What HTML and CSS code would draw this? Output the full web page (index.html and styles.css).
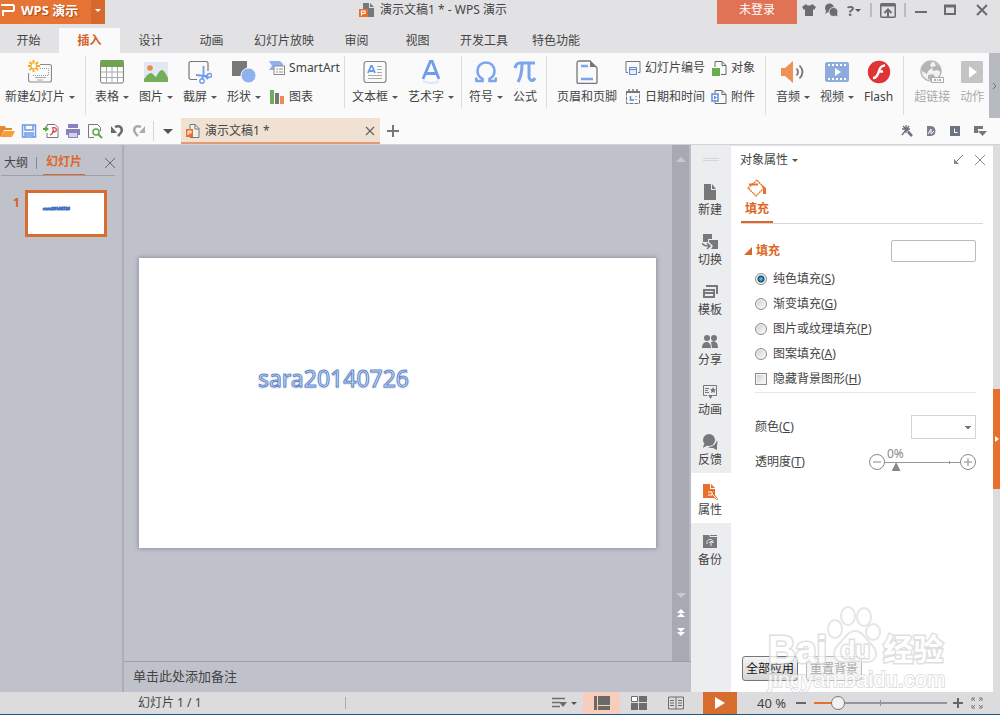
FILE: index.html
```html
<!DOCTYPE html>
<html lang="zh-CN">
<head>
<meta charset="utf-8">
<title>演示文稿1 * - WPS 演示</title>
<link rel="stylesheet" href="styles.css">
</head>
<body>
<header class="titlebar">
  <button class="brand">
    <svg width="18" height="18" viewBox="0 0 18 18" fill="none" stroke="#fff" stroke-width="2"><path d="M1 2h12l1 1v4l-1 1H3v5"/></svg>
    <span class="brand-name">WPS 演示</span>
    <span class="brand-arrow"><i class="caret"></i></span>
  </button>
  <h1 class="window-title">
    <svg width="16" height="16" viewBox="0 0 16 16"><path d="M4 1h6v5h5v9H4z" fill="#77787b"/><path d="M11 1l4 4h-4z" fill="#77787b"/><path d="M0 7h9v8H0z" fill="#e8702c"/><path d="M2.500 13.500V9H6v2.500H3" fill="none" stroke="#fff" stroke-width="1.200"/></svg>
    演示文稿1 * - WPS 演示
  </h1>
  <button class="login">未登录</button>
  <div class="window-tools">
    <button aria-label="皮肤"><svg width="14" height="14" viewBox="0 0 14 14" fill="#6b6c6f"><path d="M4 1c1 2 5 2 6 0l4 3-2 3-1-1v7H3V6L2 7 0 4z"/></svg></button>
    <button aria-label="反馈"><svg width="14" height="14" viewBox="0 0 14 14" fill="#6b6c6f"><circle cx="5.500" cy="5" r="4.500"/><path d="M2 8l-1 3 3-2z"/><circle cx="9.500" cy="9" r="4.500" stroke="#e2e2e4"/><path d="M11 12l2.500 1.500-.5-3z"/></svg></button>
    <button class="help" aria-label="帮助">?<i class="caret"></i></button>
    <span class="tool-sep"></span>
    <button aria-label="隐藏功能区"><svg width="16" height="15" viewBox="0 0 16 15" fill="none" stroke="#6b6c6f"><rect x=".75" y=".75" width="14.500" height="13.500" rx="1" stroke-width="1.500"/><path d="M1 2h14" stroke-width="3"/><path d="M8 14V7M4.500 10L8 6.500l3.500 3.500" stroke-width="2"/></svg></button>
    <span class="tool-sep"></span>
    <button aria-label="最小化"><svg width="14" height="14" viewBox="0 0 14 14"><path d="M1 9h12" stroke="#6b6c6f" stroke-width="2"/></svg></button>
    <button class="maximize" aria-label="最大化"><svg width="14" height="14" viewBox="0 0 14 14"><path d="M2 3h10v8H2z" stroke="#6b6c6f" stroke-width="2" fill="none"/><path d="M1 3h12" stroke="#6b6c6f" stroke-width="3"/></svg></button>
    <button class="close" aria-label="关闭"><svg width="14" height="14" viewBox="0 0 14 14"><path d="M2 2l10 10M12 2L2 12" stroke="#6b6c6f" stroke-width="2"/></svg></button>
  </div>
</header>

<nav class="tabs">
  <button>开始</button><button class="active">插入</button><button>设计</button><button>动画</button><button>幻灯片放映</button><button>审阅</button><button>视图</button><button>开发工具</button><button>特色功能</button>
</nav>

<section class="ribbon">
  <div class="group tall">
    <button class="tool">
      <svg width="24" height="24" viewBox="0 0 24 24" fill="none"><path d="M12 4.500h9.500a2 2 0 0 1 2 2V20a2 2 0 0 1-2 2h-19a2 2 0 0 1-2-2v-7" stroke="#8b8b8b" stroke-width="1.200"/><path d="M12 8.500h8.500v7H4" stroke="#9a9a9a" stroke-dasharray="1 1"/><path d="M7 17.500h11M9 20h6" stroke="#aaa"/><path d="M5.500 0v3.500M5.500 8v4M0 6h3.500M8 6h4M1.500 2l2.500 2.500M7.500 7.500L10 10M1.500 10L4 7.500M7.500 4.500L10 2" stroke="#f5ad20" stroke-width="2"/></svg>
      <span>新建幻灯片<i class="caret"></i></span>
    </button>
  </div>
  <div class="group first-set">
    <button class="tool">
      <svg width="24" height="24" viewBox="0 0 24 24"><rect x=".6" y="1" width="22.800" height="22" rx="1.500" fill="#fff" stroke="#777"/><path d="M.5 0h23v7H.5z" fill="#6fa552"/><path d="M1 12h22M1 17.500h22M6.500 7v16M12 7v16M17.500 7v16" stroke="#aaa"/></svg>
      <span>表格<i class="caret"></i></span>
    </button>
    <button class="tool">
      <svg width="24" height="24" viewBox="0 0 24 24"><path d="M0 2h24v20H0z" fill="#e0e9f3"/><circle cx="6" cy="8" r="2.800" fill="#f0884c"/><path d="M0 22v-3c3-4 5-6 7-6s3 3 5 4c2-4 4-7 6-7s4 4 6 8v4z" fill="#76ad57"/></svg>
      <span>图片<i class="caret"></i></span>
    </button>
    <button class="tool">
      <svg width="24" height="24" viewBox="0 0 24 24" fill="none"><path d="M9 19.500H3a2 2 0 0 1-2-2V3.500a2 2 0 0 1 2-2h15a2 2 0 0 1 2 2V11" stroke="#777" stroke-width="1.200"/><path d="M15.500 6v9l-1.500 4M8 15l9 1 3-1M17 16l3 3" stroke="#6f9bec" stroke-width="1.800"/><circle cx="14" cy="21" r="2.200" stroke="#6f9bec" stroke-width="1.400"/><circle cx="21.500" cy="15.500" r="2" stroke="#6f9bec" stroke-width="1.400"/></svg>
      <span>截屏<i class="caret"></i></span>
    </button>
    <button class="tool">
      <svg width="24" height="24" viewBox="0 0 24 24"><path d="M0 1h15v15H0z" fill="#77787a"/><circle cx="16.500" cy="15.500" r="7.500" fill="#8db2ee" stroke="#fafafa"/></svg>
      <span>形状<i class="caret"></i></span>
    </button>
    <div class="stack">
      <button class="mini"><svg width="16" height="16" viewBox="0 0 16 16"><path d="M0 1h11l3 3v2H6v4H0l3-4z" fill="#8db2ee"/><rect x="5" y="6" width="10.500" height="8.500" fill="#fff" stroke="#888"/><path d="M7 9h2M10 9h4M7 12h2M10 12h4" stroke="#888"/></svg>SmartArt</button>
      <button class="mini"><svg width="16" height="16" viewBox="0 0 16 16"><path d="M1 1h4v14H1z" fill="#72ad55"/><path d="M6 4h4v11H6z" fill="#777"/><path d="M11 7h4v8h-4z" fill="#ee8a55"/></svg>图表</button>
    </div>
  </div>
  <div class="group">
    <button class="tool">
      <svg width="24" height="24" viewBox="0 0 24 24" fill="none"><rect x="1" y="1.500" width="22" height="21" rx="2.500" stroke="#888" stroke-width="1.200"/><path d="M5 13l3-7h1l3 7M6 11h5" stroke="#6f9bec" stroke-width="1.800"/><path d="M14 6.500h5M14 9.500h5M14 12.500h5M5 15.500h14M5 18.500h14" stroke="#aaa"/></svg>
      <span>文本框<i class="caret"></i></span>
    </button>
    <button class="tool">
      <svg width="24" height="24" viewBox="0 0 24 24" fill="none"><path d="M4 19L11.500 1h1.500L20 19M7 13.500h10" stroke="#6f9bec" stroke-width="2.800"/><path d="M4 21q8 4 16 0" stroke="#dbe8fc" stroke-width="2"/></svg>
      <span>艺术字<i class="caret"></i></span>
    </button>
  </div>
  <div class="group symbols">
    <button class="tool">
      <svg width="24" height="24" viewBox="0 0 24 24" fill="none"><path d="M2 17.500l.5 3.500H8.500v-2C5 17 3.500 14 3.500 11 3.500 6 7 2.500 12 2.500S20.500 6 20.500 11c0 3-1.500 6-5 8v2h6l.5-3.500" stroke="#7da4ef" stroke-width="2.600"/></svg>
      <span>符号<i class="caret"></i></span>
    </button>
    <button class="tool">
      <svg width="24" height="24" viewBox="0 0 24 24" fill="none" stroke="#7da4ef"><path d="M2 8c1-4 2-5 5-5h15" stroke-width="3.200"/><path d="M9 4c0 8-1 13-4 18" stroke-width="3"/><path d="M16 4v12c0 5 4 6 6 2" stroke-width="3"/></svg>
      <span>公式</span>
    </button>
  </div>
  <div class="group tall">
    <button class="tool">
      <svg width="24" height="24" viewBox="0 0 24 24" fill="none"><path d="M15 1H4a2 2 0 0 0-2 2v19a1.500 1.500 0 0 0 1.500 1.500h17A1.500 1.500 0 0 0 22 22V8z" stroke="#777" stroke-width="1.300"/><path d="M15 1v6h7z" fill="#777"/><path d="M6 6h7M6 19h12" stroke="#7da4ef" stroke-width="2.500"/></svg>
      <span>页眉和页脚</span>
    </button>
    <div class="stack">
      <button class="mini"><svg width="16" height="16" viewBox="0 0 16 16" fill="none"><path d="M3 12.500H1V1.500h14v11h-2" stroke="#777"/><path d="M4.500 7.500h7v7h-7z" fill="#e7effd" stroke="#5e89dc"/><path d="M5 9.500h6" stroke="#5e89dc"/></svg>幻灯片编号</button>
      <button class="mini"><svg width="16" height="16" viewBox="0 0 16 16" fill="none"><path d="M1.500 3.500h13v11h-13z" stroke="#777" stroke-dasharray="4 1"/><path d="M1 3h14" stroke="#777" stroke-width="2"/><path d="M4 0v4M8 0v4M12 0v4" stroke="#777" stroke-width="1.500"/><path d="M5.500 7v4H9" stroke="#5e89dc" stroke-width="1.500"/><path d="M10 7.500h2M10 10.500h2" stroke="#aaa"/></svg>日期和时间</button>
    </div>
    <div class="stack stack-near">
      <button class="mini"><svg width="16" height="16" viewBox="0 0 16 16" fill="none"><path d="M4 7V1.500h7l4 4v9h-5M11 1.500v4h4" stroke="#666"/><path d="M1 8h8v8H1z" fill="#6cab4e"/></svg>对象</button>
      <button class="mini"><svg width="16" height="16" viewBox="0 0 16 16" fill="none"><path d="M4 4V1.500h7l4 4v9H4V13M11 1.500v4h4" stroke="#666"/><path d="M1 5h6v7H1z" fill="#fff" stroke="#5e89dc" stroke-width="1.500"/><path d="M3 6.500v4L6 8.500z" fill="#5e89dc"/></svg>附件</button>
    </div>
  </div>
  <div class="group tall">
    <button class="tool">
      <svg width="24" height="24" viewBox="0 0 24 24" fill="none"><path d="M0 8h4l8-7v22l-8-7H0z" fill="#ee9157"/><path d="M15.500 8.500q3 3.500 0 7M18.500 5.500q6 6.500 0 13" stroke="#777" stroke-width="1.800"/></svg>
      <span>音频<i class="caret"></i></span>
    </button>
    <button class="tool">
      <svg width="24" height="24" viewBox="0 0 24 24"><rect y="2" width="24" height="20" rx="2" fill="#8eabdd"/><path d="M3 5h19M3 19h19" stroke="#fff" stroke-width="2" stroke-dasharray="2 2"/><path d="M10 8v8l6-4z" fill="#fff"/></svg>
      <span>视频<i class="caret"></i></span>
    </button>
    <button class="tool">
      <svg width="24" height="24" viewBox="0 0 24 24" fill="none"><circle cx="12" cy="12" r="11.200" fill="#df3434"/><path d="M18 5.500c-5 0-5.500 4-6.500 7s-2 5.500-5.500 5.500M11 11.500h5" stroke="#fff" stroke-width="2.400"/></svg>
      <span>Flash</span>
    </button>
  </div>
  <div class="group last">
    <button class="tool" disabled>
      <svg width="24" height="24" viewBox="0 0 24 24"><circle cx="11" cy="11" r="10" fill="#f2f2f2" stroke="#bababa" stroke-width="1.500"/><path d="M2 7l5-5 5 0-2 3 2 3-4 3-1 3-5-3zM14 2l6 5 1 5-4-2-4 1-1-4 4-1zM8 15l5-1 3 4-4 3-4-2z" fill="#b4b4b4"/><path d="M11.500 17.500h12v5h-12z" fill="#fafafa" stroke="#aaa"/><path d="M14 20h2M17 20h1M19 20h2" stroke="#aaa" stroke-width="2"/></svg>
      <span>超链接</span>
    </button>
    <button class="tool" disabled>
      <svg width="24" height="24" viewBox="0 0 24 24"><rect x="1" y="1" width="22" height="22" rx="1.500" fill="#c4c4c4"/><path d="M9 6v12l8-6z" fill="#fff"/></svg>
      <span>动作</span>
    </button>
  </div>
  <button class="ribbon-more" aria-label="更多"><svg width="5" height="8" viewBox="0 0 5 8"><path d="M1 1l3 3-3 3" fill="none" stroke="#6d7078"/></svg></button>
</section>

<section class="quickbar">
  <div class="quick-tools">
    <button aria-label="打开"><svg width="16" height="16" viewBox="0 0 16 16"><path d="M1 3h5l1 2h6v2H5l-3 6H1z" fill="#e58930"/><path d="M5 8h11l-3 6H1z" fill="#fa9d38"/></svg></button>
    <button aria-label="保存"><svg width="16" height="16" viewBox="0 0 16 16" fill="none" stroke="#6f98e6" stroke-width="1.500"><path d="M1.500 2h13v12h-13z"/><path d="M4 2v5h8V2M4 14V10h8v4M5 12h6"/></svg></button>
    <button aria-label="输出为PDF"><svg width="16" height="16" viewBox="0 0 16 16" fill="none"><path d="M4 4V1.500h8l3 3v10H4V10" stroke="#777"/><path d="M0 5h3v2H0z" fill="#58a83e"/><path d="M2 3l4 3-4 3z" fill="#58a83e"/><path d="M9 5c4-1 5 1 4 3-1 1-3 1-4 1M10 6c1 3-1 5-3 6" stroke="#d6474b" stroke-width="1.300"/></svg></button>
    <button aria-label="打印"><svg width="16" height="16" viewBox="0 0 16 16"><path d="M3 1h10v4H3zM1 6h14v6H1z" fill="#8883bd"/><path d="M3.500 9.500h9v5h-9z" fill="#d5d2ef" stroke="#8883bd"/></svg></button>
    <button aria-label="打印预览"><svg width="16" height="16" viewBox="0 0 16 16" fill="none"><path d="M7 14.500H1.500v-13h9l3 3V8" stroke="#777"/><circle cx="9" cy="9" r="3" stroke="#63a34a" stroke-width="1.500"/><path d="M11 11l4 4" stroke="#63a34a" stroke-width="2"/></svg></button>
    <button aria-label="撤销"><svg width="16" height="16" viewBox="0 0 16 16" fill="none"><path d="M6 4c6-3 10 3 3 9" stroke="#696969" stroke-width="2.500"/><path d="M2 3v7h6z" fill="#696969"/></svg></button>
    <button aria-label="恢复"><svg width="16" height="16" viewBox="0 0 16 16" fill="none"><path d="M10 4C4 1 0 7 7 13" stroke="#aaa" stroke-width="2.500"/><path d="M14 3v7H8z" fill="#aaa"/></svg></button>
    <span class="quick-sep"></span>
    <button aria-label="自定义"><i class="caret big"></i></button>
  </div>
  <div class="doc-tab">
    <svg width="16" height="16" viewBox="0 0 16 16"><path d="M5 1.500h5l4 4v9H5z" fill="#eee" stroke="#777"/><path d="M10 1v5h4" fill="none" stroke="#777"/><path d="M1 6h7v8H1z" fill="#e8702c"/><path d="M3 12V8h3v2H3" fill="none" stroke="#fff"/></svg>
    <span>演示文稿1 *</span>
    <button aria-label="关闭文稿"><svg width="10" height="10" viewBox="0 0 10 10"><path d="M1 1l8 8M9 1L1 9" stroke="#666" stroke-width="1.300"/></svg></button>
  </div>
  <button class="new-doc" aria-label="新建文稿"><svg width="14" height="14" viewBox="0 0 14 14"><path d="M7 1v12M1 7h12" stroke="#777" stroke-width="2"/></svg></button>
  <div class="quick-right">
    <button aria-label="工具"><svg width="12" height="12" viewBox="0 0 12 12" fill="none" stroke="#6c6e7d"><path d="M5 0v8M1 4h8M2 1l7 7M8 1L1 10" stroke-width="1.300"/><path d="M7 7l4 4" stroke-width="2.500"/></svg></button>
    <button aria-label="文档"><svg width="12" height="12" viewBox="0 0 12 12"><path d="M2 1h4c6 0 6 10 0 10H2z" fill="#7b7e8d"/><path d="M3 9l3-5v5l3-3" stroke="#fff" fill="none"/></svg></button>
    <button aria-label="历史"><svg width="12" height="12" viewBox="0 0 12 12"><path d="M1 1h10v10H1z" fill="#6e7281"/><path d="M5.500 3.500v4h3" stroke="#fff" fill="none"/></svg></button>
    <button aria-label="窗口"><svg width="14" height="12" viewBox="0 0 14 12" fill="#75767c"><path d="M1 1h9v3H5v4H1z"/><path d="M5 6h9l-4.500 5z"/></svg></button>
  </div>
</section>

<main class="workspace">
  <aside class="outline">
    <div class="outline-tabs">
      <button>大纲</button><span class="bar"></span><button class="active">幻灯片</button>
      <button class="outline-close" aria-label="关闭"><svg width="10" height="10" viewBox="0 0 10 10"><path d="M0 0l10 10M10 0L0 10" stroke="#66676e"/></svg></button>
    </div>
    <div class="thumb-row">
      <span class="thumb-no">1</span>
      <div class="thumb"><div class="thumb-text">sara20140726</div></div>
    </div>
  </aside>

  <section class="editor">
    <div class="canvas">
      <div class="stage"><div class="slide"><div class="wordart">sara20140726</div></div></div>
      <div class="scrollbar">
        <button aria-label="向上"><svg width="10" height="6" viewBox="0 0 10 6"><path d="M0 6l5-5 5 5z" fill="#c9c9cc"/></svg></button>
        <span class="scroll-space"></span>
        <button aria-label="向下"><svg width="10" height="6" viewBox="0 0 10 6"><path d="M0 0l5 5 5-5z" fill="#c9c9cc"/></svg></button>
        <button aria-label="上一张"><svg width="10" height="10" viewBox="0 0 10 10" fill="#fff"><path d="M1 5l4-4 4 4zM1 9l4-4 4 4z"/></svg></button>
        <button aria-label="下一张"><svg width="10" height="10" viewBox="0 0 10 10" fill="#fff"><path d="M1 1l4 4 4-4zM1 5l4 4 4-4z"/></svg></button>
      </div>
    </div>
    <div class="notes">单击此处添加备注</div>
  </section>

  <nav class="rail">
    <span class="grip"></span>
    <button><svg width="16" height="16" viewBox="0 0 16 16" fill="#77787a"><path d="M2 0h7v6h5v10H2z"/><path d="M10 0l4 5h-4z"/></svg>新建</button>
    <button><svg width="16" height="16" viewBox="0 0 16 16" fill="#77787a"><path d="M1 0h9v5H6v3H1zM7 6h9v9H9l2-3-4-4z"/><path d="M0 9c1 3 4 3 7 3M5 9l3 3-3 3" fill="none" stroke="#77787a" stroke-width="1.500"/></svg>切换</button>
    <button><svg width="16" height="16" viewBox="0 0 16 16" fill="none" stroke="#77787a" stroke-width="2"><path d="M4 2h11v8"/><path d="M2 6h10v7H2z"/><path d="M3 9h8"/></svg>模板</button>
    <button><svg width="16" height="16" viewBox="0 0 16 16" fill="#77787a"><circle cx="5" cy="4" r="3"/><circle cx="12" cy="4" r="3"/><path d="M0 14c0-8 9-8 9 0zM9 8c4-2 7 1 7 6h-6z"/></svg>分享</button>
    <button><svg width="16" height="16" viewBox="0 0 16 16" fill="none" stroke="#77787a"><path d="M5 11.500H1.500v-10h13v10H11M3 4.500h4M3 6.500h3M3 8.500h4"/><path d="M11 3l1 2h2l-1.500 1.500.5 2.500-2-1-2 1 .5-2.500L8 5h2zM6 11h5l-2.500 4z" fill="#77787a" stroke="none"/></svg>动画</button>
    <button><svg width="16" height="16" viewBox="0 0 16 16" fill="#77787a"><circle cx="7" cy="6" r="6"/><path d="M2 10l-1 4 5-3zM15 6c1 3 0 4 0 6v4l-4-2c-2 0-4 0-5-1 5 0 8-3 9-7z"/></svg>反馈</button>
    <button class="active"><svg width="16" height="16" viewBox="0 0 16 16"><path d="M1 0h7v5h5v6l3 4-1 1-3-2H1z" fill="#e8702c"/><path d="M9 0l4 4H9z" fill="#e8702c"/><path d="M6 8h4v3H6M10 10l5 5" stroke="#fff" fill="none"/></svg>属性</button>
    <button><svg width="16" height="16" viewBox="0 0 16 16"><path d="M1 1h6l1 2h7v11H1z" fill="#77787a"/><path d="M8 1.500h7" stroke="#77787a"/><path d="M5 10c-1-6 7-6 6-1M9 7v5M7 9l2-2 2 2" fill="none" stroke="#ecedef"/></svg>备份</button>
  </nav>

  <aside class="panel">
    <header class="panel-head">
      <button>对象属性<i class="caret"></i></button>
      <span class="grow"></span>
      <button aria-label="停靠"><svg width="10" height="10" viewBox="0 0 10 10"><path d="M10 0L3 7" stroke="#777"/><path d="M1 4v5h5z" fill="#888"/></svg></button>
      <button aria-label="关闭"><svg width="10" height="10" viewBox="0 0 10 10"><path d="M0 0l10 10M10 0L0 10" stroke="#888"/></svg></button>
    </header>
    <div class="panel-tabs">
      <button class="panel-tab"><svg width="20" height="18" viewBox="0 0 20 18" fill="none"><path d="M1 9l9-8 7 8-8 8z" stroke="#e8702c" stroke-width="1.300" stroke-dasharray="2 .5"/><path d="M2 5.500h9" stroke="#e8702c" stroke-width="2"/><path d="M14 5l5 4v6h-3V9z" fill="#e8702c"/></svg>填充</button>
    </div>
    <form class="props">
      <div class="prop-row section-row">
        <span class="section-title"><svg width="8" height="8" viewBox="0 0 8 8"><path d="M8 0v8H0z" fill="#dd6826"/></svg>填充</span>
        <input class="preview" type="text" aria-label="填充预览">
      </div>
      <fieldset class="choices">
        <label><input type="radio" name="fill" checked><span>纯色填充(<u>S</u>)</span></label>
        <label><input type="radio" name="fill"><span>渐变填充(<u>G</u>)</span></label>
        <label><input type="radio" name="fill"><span>图片或纹理填充(<u>P</u>)</span></label>
        <label><input type="radio" name="fill"><span>图案填充(<u>A</u>)</span></label>
        <label><input type="checkbox"><span>隐藏背景图形(<u>H</u>)</span></label>
      </fieldset>
      <div class="prop-row color-row">
        <label for="color">颜色(<u>C</u>)</label>
        <select id="color"><option></option></select>
      </div>
      <div class="prop-row alpha-row">
        <label for="alpha">透明度(<u>T</u>)</label>
        <div class="alpha">
          <button type="button" aria-label="减少"><svg width="16" height="16" viewBox="0 0 16 16" fill="none" stroke="#888"><circle cx="8" cy="8" r="7.500"/><path d="M4 8h8"/></svg></button>
          <div class="alpha-track"><output for="alpha">0%</output><input id="alpha" type="range" min="0" max="100" value="10"></div>
          <button type="button" aria-label="增加"><svg width="16" height="16" viewBox="0 0 16 16" fill="none" stroke="#888"><circle cx="8" cy="8" r="7.500"/><path d="M4 8h8M8 4v8"/></svg></button>
        </div>
      </div>
    </form>
    <footer class="panel-foot">
      <button>全部应用</button><button disabled>重置背景</button>
    </footer>
    <div class="watermark">
      <svg class="paw" width="56" height="60" viewBox="0 0 56 60" fill="#fff" stroke="#dedede" stroke-width="2"><ellipse cx="8" cy="23" rx="7" ry="9"/><ellipse cx="21" cy="10" rx="7" ry="9"/><ellipse cx="37" cy="11" rx="7" ry="9"/><ellipse cx="46" cy="26" rx="7" ry="8"/><path d="M28 25c8 0 10 8 17 14 9 10 2 18-7 17-7-1-13-1-20 0-10 1-15-8-7-17 7-6 9-14 17-14z"/></svg>
      <div class="mark-line"><span>Bai</span><span class="du">du</span><span class="cn">经验</span></div>
      <div class="mark-url">jingyan.baidu.com</div>
    </div>
  </aside>
  <div class="edge"><button aria-label="收起"><svg width="4" height="6" viewBox="0 0 4 6"><path d="M0 0v6l4-3z" fill="#fff"/></svg></button></div>
</main>

<footer class="status">
  <span class="page-no">幻灯片 1 / 1</span>
  <span class="status-sep"></span>
  <span class="grow"></span>
  <button class="note-btn" aria-label="备注"><svg width="16" height="12" viewBox="0 0 16 12" fill="none" stroke="#6d6d6f"><path d="M1 1.500h13M1 5.500h8M1 9.500h8" stroke-width="1.300"/><path d="M8 5h8l-4 5z" fill="#6d6d6f" stroke="none"/></svg><i class="caret"></i></button>
  <button class="view active" aria-label="普通视图"><svg width="16" height="14" viewBox="0 0 16 14" fill="#6d6868"><path d="M0 0h3v14H0zM4 0h12v9H4zM4 10h12v4H4z"/></svg></button>
  <button class="view" aria-label="浏览视图"><svg width="16" height="14" viewBox="0 0 16 14" fill="#6d6d6f"><path d="M.5.500h6v5h-6z" fill="#fff" stroke="#6d6d6f"/><path d="M8 0h8v6H8zM0 7h7v7H0zM8 7h8v7H8z"/></svg></button>
  <button class="view" aria-label="阅读视图"><svg width="16" height="14" viewBox="0 0 16 14" fill="none" stroke="#6d6d6f"><path d="M.5 1h15v12H.5zM8 1v12M2 4.500h4M2 7h4M2 9.500h4M10 4.500h4M10 7h4M10 9.500h4"/></svg></button>
  <button class="play" aria-label="放映"><svg width="12" height="14" viewBox="0 0 12 14"><path d="M1 1v12l10-6z" fill="#fff"/></svg></button>
  <span class="percent">40 %</span>
  <button class="zoom-btn" aria-label="缩小"><svg width="12" height="12" viewBox="0 0 12 12"><path d="M1 6h10" stroke="#666" stroke-width="2"/></svg></button>
  <input class="zoom" type="range" min="0" max="100" value="14" aria-label="显示比例">
  <button class="zoom-btn" aria-label="放大"><svg width="12" height="12" viewBox="0 0 12 12"><path d="M1 6h10M6 1v10" stroke="#666" stroke-width="2"/></svg></button>
  <button class="fit" aria-label="适应窗口"><svg width="12" height="12" viewBox="0 0 12 12" fill="none" stroke="#777"><path d="M1 4V1h3M8 1h3v3M11 8v3H8M4 11H1V8M2 2l2 2M10 2L8 4M10 10L8 8M2 10l2-2"/></svg></button>
</footer>
</body>
</html>
```

FILE: styles.css
```css
* { box-sizing: border-box; }

body {
  margin: 0;
  height: 100vh;
  display: flex;
  flex-direction: column;
  overflow: hidden;
  background: #e2e2e4;
  color: #444;
  font: 12px/16px "Noto Sans", "Noto Sans CJK SC", sans-serif;
}

button {
  display: flex;
  align-items: center;
  justify-content: center;
  margin: 0;
  padding: 0;
  border: 0;
  background: none;
  color: inherit;
  font: inherit;
  white-space: nowrap;
}

svg { flex: none; display: block; }
.grow { flex: 1; }

.caret {
  display: inline-block;
  margin-left: 4px;
  border: 3px solid transparent;
  border-top-color: #555;
  border-bottom: 0;
  vertical-align: middle;
}
.caret.big { margin: 0; border-width: 5px 5px 0; }

/* Title bar */
.titlebar { display: flex; height: 28px; align-items: flex-start; }
.brand { width: 105px; height: 24px; background: #e57435; color: #fff; justify-content: flex-start; }
.brand-name { flex: 1; padding-bottom: 4px; font-size: 13px; font-weight: bold; text-align: left; text-shadow: 1px 1px 1px #a84b18; }
.brand svg { margin-right: 3px; }
.brand-arrow { display: flex; align-items: center; justify-content: center; width: 14px; height: 24px; padding-bottom: 4px; background: #d8692e; }
.brand-arrow .caret { margin: 0; border-top-color: #fff; }
.window-title {
  flex: 1;
  display: flex;
  align-items: center;
  justify-content: center;
  gap: 5px;
  margin: 0;
  padding-left: 44px;
  height: 20px;
  font-size: 12px;
  font-weight: normal;
}
.login { width: 80px; height: 24px; padding-bottom: 4px; background: #e07356; color: #fff; }
.window-tools { display: flex; align-items: center; gap: 8px; width: 203px; height: 20px; padding-left: 5px; }
.window-tools .help { width: 16px; font-size: 15px; font-weight: bold; color: #6b6c6f; }
.window-tools .help .caret { margin-left: 1px; }
.window-tools .maximize { margin-left: 7px; }
.window-tools .close { margin-left: 10px; }
.tool-sep { width: 2px; height: 14px; background: #bbbbbe; }

/* Tabs */
.tabs { display: flex; height: 25px; margin-left: -2px; }
.tabs button { min-width: 61px; padding: 0 12px; }
.tabs .active { background: #fafafa; color: #d7601e; font-weight: bold; }

/* Ribbon */
.ribbon { display: flex; height: 65px; background: #fafafa; }
.group { display: flex; align-items: flex-start; gap: 10px; height: 52px; margin-top: 3px; padding: 4px 7px 0; border-right: 1px solid #dcdcdc; }
.group.tall { height: 59px; padding: 4px 10px 0; }
.group.tall:first-child { padding-left: 5px; }
.group.last { border: 0; padding: 4px 5px 0 10px; }
.group.first-set { padding: 4px 4px 0 9px; }
.group.symbols { padding-right: 9px; }
.tool { flex-direction: column; gap: 5px; }
.tool:disabled { color: #aaa; }
.stack { display: flex; flex-direction: column; gap: 13px; margin-left: -2px; }
.stack-near { margin-left: -4px; }
.mini { gap: 4px; justify-content: flex-start; height: 16px; }
.ribbon-more { width: 13px; margin-left: auto; background: #b8bac2; }

/* Quick bar */
.quickbar { display: flex; align-items: center; height: 27px; background: #fafafa; border-bottom: 1px solid #d2d3d9; }
.quick-tools { display: flex; align-items: center; width: 185px; margin-left: -4px; }
.quick-tools button { width: 22px; }
.quick-sep { width: 1px; height: 20px; margin: 0 3px; background: #d5d5d5; }
.doc-tab { display: flex; align-items: center; gap: 4px; width: 199px; height: 26px; padding: 2px 5px 0 4px; background: #f0e1d3; border-bottom: 2px solid #e39a73; }
.doc-tab button { margin-left: auto; }
.new-doc { width: 26px; }
.quick-right { display: flex; gap: 12px; margin-left: auto; padding-right: 13px; }

/* Workspace */
.workspace { flex: 1; display: flex; min-height: 0; background: #bfc2cb; }
.outline { width: 124px; border-right: 2px solid #abadb7; }
.outline-tabs { display: flex; align-items: stretch; height: 31px; margin: 0 7px 0 1px; padding-top: 5px; border-bottom: 1px solid #9d9fa9; }
.outline-tabs button { padding: 0 3px; }
.outline-tabs .active { color: #dd6826; font-weight: bold; border-bottom: 1px solid #dd6826; }
.outline-tabs .bar { width: 1px; height: 12px; margin: 7px 6px 0 5px; background: #85878f; }
.outline-tabs .outline-close { margin-left: auto; padding: 0; }
.thumb-row { display: flex; gap: 5px; padding: 14px 0 0 13px; }
.thumb-no { width: 7px; padding-top: 5px; color: #dd5f1e; font-weight: bold; }
.thumb { width: 82px; height: 47px; padding: 13px 0 0 15px; background: #fff; border: 3px solid #d96d2f; }
.thumb-text { color: #4472c4; font-size: 4px; line-height: 6px; font-weight: bold; -webkit-text-stroke: 1px #4472c4; }

.editor { flex: 1; display: flex; flex-direction: column; min-width: 0; }
.canvas { flex: 1; display: flex; min-height: 0; }
.stage { flex: 1; display: flex; align-items: center; justify-content: center; padding: 0 16px 0 15px; }
.slide { position: relative; width: 100%; aspect-ratio: 16 / 9; background: #fff; box-shadow: 0 0 4px 1px #92949e; }
.wordart {
  position: absolute;
  left: 23%;
  top: 36%;
  color: #dbe6f7;
  font-size: 23px;
  line-height: 32px;
  -webkit-text-stroke: 1px #5f88cd;
  text-shadow: 0 1px 2px #b5bccb;
}
.scrollbar { display: flex; flex-direction: column; gap: 9px; width: 19px; padding: 11px 0 24px; background: #a9a9b3; border-right: 2px solid #b9bbc4; }
.scroll-space { flex: 1; }
.notes { height: 31px; padding: 6px 9px; border-top: 1px solid #9c9ea8; font-size: 13px; }

/* Side rail */
.rail { display: flex; flex-direction: column; width: 40px; background: #ecedef; }
.grip { width: 16px; height: 3px; margin: 13px auto 12px; border: solid #d3d6de; border-width: 1px 0; }
.rail button { flex-direction: column; gap: 2px; height: 50px; padding: 5px 2px 0 0; }
.rail .active { background: #fff; }

/* Properties */
.panel { position: relative; display: flex; flex-direction: column; width: 262px; background: #fff; }
.panel-head { display: flex; gap: 12px; height: 29px; padding: 0 8px 0 9px; border-top: 1px solid #e2e2e4; }
.panel-tabs { display: flex; margin: 0 10px; border-bottom: 1px solid #d8d8d8; }
.panel-tab { flex-direction: column; gap: 4px; width: 32px; height: 49px; border-bottom: 2px solid #dd6826; color: #dd6826; font-weight: bold; }
.props { padding: 16px 17px 0 24px; }
.prop-row { display: flex; align-items: center; justify-content: space-between; }
.section-row { margin-left: -11px; }
.section-title { display: flex; align-items: center; gap: 4px; color: #dd6826; font-weight: bold; }
.preview { width: 85px; height: 22px; border: 1px solid #bbb; border-radius: 2px; background: #fff; }
.choices { margin: 0; padding: 4px 0 1px; border: 0; border-bottom: 1px solid #e8e8e8; }
.choices label { display: flex; align-items: center; gap: 6px; height: 25px; }
.choices input { appearance: none; width: 12px; height: 12px; margin: 0; border: 1px solid #8c8c8c; background: linear-gradient(135deg, #ccc, #fff); box-shadow: inset 0 0 0 1px #f4f4f4; }
.choices input[type="radio"] { border-radius: 50%; }
.choices input[type="radio"]:checked { background: radial-gradient(circle, #4bb4dc 0 1px, #173e66 3px, #e4e8ec 4px); }
.color-row { padding-top: 22px; }
.color-row select { appearance: none; width: 65px; height: 24px; border: 1px solid #d5d5d5; background: linear-gradient(to bottom right, #6e7591 50%, transparent 52%) right 4px center / 3px 3px no-repeat, linear-gradient(to bottom left, #6e7591 50%, transparent 52%) right 7px center / 3px 3px no-repeat, #fff; }
.alpha-row { padding-top: 15px; }
.alpha { display: flex; align-items: center; }
.alpha-track { position: relative; width: 75px; }
.alpha-track output { position: absolute; left: 2px; bottom: 8px; color: #888; }
.alpha-track input { appearance: none; display: block; width: 100%; height: 16px; margin: 0; background: linear-gradient(#999, #999) 87% center / 1px 3px no-repeat, linear-gradient(#999, #999) center / 100% 1px no-repeat; }
.alpha-track input::-webkit-slider-thumb { appearance: none; width: 9px; height: 9px; margin-top: 9px; background: #888; clip-path: polygon(50% 0, 100% 100%, 0 100%); }
.panel-foot { display: flex; gap: 8px; margin-top: auto; padding: 0 11px 11px; }
.panel-foot button { width: 56px; height: 25px; border: 1px solid #777; border-radius: 3px; background: linear-gradient(#f4f4f4, #d5d5d5); color: #111; }
.panel-foot button:disabled { border-color: #bbb; background: #f5f5f5; color: #aaa; }

.watermark { position: absolute; right: 47px; bottom: 0; width: 178px; height: 86px; color: #fff; font-family: "Liberation Sans", "Noto Sans CJK SC", sans-serif; pointer-events: none; opacity: .75; }
.mark-line { position: absolute; top: 24px; left: 0; display: flex; align-items: center; font-size: 38px; font-weight: bold; line-height: 40px; white-space: nowrap; paint-order: stroke fill; -webkit-text-stroke: 3px #d5d5d5; }
.mark-line .du { width: 56px; text-align: center; font-size: 24px; }
.mark-line .cn { font-size: 30px; }
.paw { position: absolute; left: 59px; top: 0; }
.mark-url { position: absolute; top: 62px; left: 0; font-size: 22px; line-height: 24px; paint-order: stroke fill; -webkit-text-stroke: 2px #d5d5d5; }

.edge { display: flex; flex-direction: column; width: 7px; padding-top: 40px; justify-content: center; background: #dcdddf; }
.edge button { width: 7px; height: 100px; background: #e8702c; }

/* Status bar */
.status { display: flex; align-items: center; height: 23px; padding-right: 17px; background: #dcdcde; border-bottom: 1px solid #1c5684; }
.page-no { width: 207px; margin-left: 138px; }
.status-sep { width: 1px; height: 12px; background: #aaa; }
.note-btn { margin-right: 6px; }
.view { width: 37px; height: 22px; }
.view.active { background: #f8cdbb; }
.play { width: 34px; height: 22px; margin-left: 9px; background: #d76e2f; }
.percent { width: 58px; padding-left: 20px; font-size: 13px; white-space: nowrap; }
.zoom-btn { width: 12px; }
.zoom { appearance: none; width: 133px; height: 16px; margin: 0 5px 0 7px; background: linear-gradient(#e8702c, #e8702c) 0 50% / 18px 2px no-repeat, linear-gradient(#94949c, #94949c) 50% 50% / 1px 6px no-repeat, linear-gradient(#94949c, #94949c) 0 50% / 100% 2px no-repeat; }
.zoom::-webkit-slider-thumb { appearance: none; width: 14px; height: 14px; border: 1px solid #777; border-radius: 50%; background: #f2f2f2; }
.fit { margin-left: 7px; }
```
